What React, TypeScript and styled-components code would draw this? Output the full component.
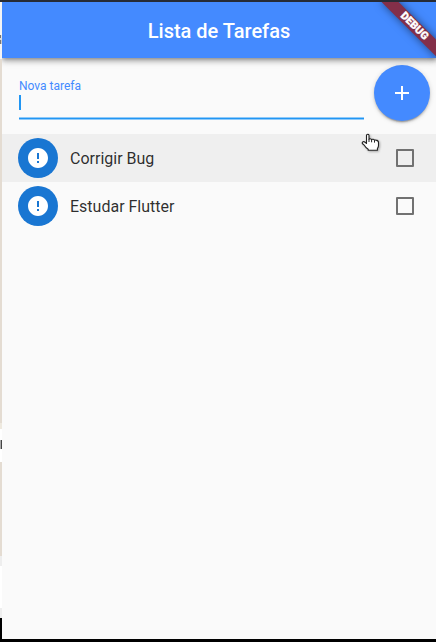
import React, { useState } from "react";
import styled, { createGlobalStyle } from "styled-components";

const GlobalStyle = createGlobalStyle`
  *, *::before, *::after { box-sizing: border-box; }
  html, body { margin: 0; background: #000; }
  body { font-family: Roboto, "Noto Sans", sans-serif; overflow: hidden; }
`;

const Desktop = styled.div`
  position: relative;
  display: grid;
  grid-template-columns: 2px 1fr;
  grid-template-rows: 2px 637px 3px;
  width: 436px;
  height: 642px;
  overflow: hidden;
  background: #000;
`;

const WindowEdge = styled.div`
  grid-column: 1 / -1;
  background: #262b36;
`;

const Backdrop = styled.div`
  display: flex;
  flex-direction: column;
`;

const Band = styled.div<{ $height: number; $fill: string }>`
  height: ${(p) => p.$height}px;
  background: ${(p) => p.$fill};
`;

const Screen = styled.main`
  position: relative;
  display: flex;
  flex-direction: column;
  overflow: hidden;
  background: #fafafa;
`;

const AppBar = styled.header`
  position: relative;
  display: flex;
  flex: 0 0 56px;
  align-items: center;
  justify-content: center;
  background: #448aff;
  box-shadow: 0 2px 4px -1px rgba(0, 0, 0, 0.3), 0 4px 5px rgba(0, 0, 0, 0.16),
    0 1px 10px rgba(0, 0, 0, 0.14);
`;

const Title = styled.h1`
  margin: 0;
  padding: 2px 0 0 0;
  color: #fff;
  font-size: 20px;
  font-weight: 500;
  line-height: 24px;
`;

const DebugBanner = styled.div`
  position: absolute;
  top: 27.5px;
  right: -42px;
  width: 80px;
  height: 12px;
  transform: rotate(45deg);
  transform-origin: 40px -27.5px;
  background: #832f49;
  box-shadow: 0 0 8px rgba(0, 0, 0, 0.5);
  color: #fff;
  font-size: 10.6px;
  font-weight: 900;
  line-height: 12px;
  text-align: center;
  letter-spacing: 0.1px;
  -webkit-text-stroke: 0.35px #fff;
`;

const Composer = styled.form`
  display: flex;
  align-items: flex-start;
  height: 76px;
  padding: 7px 6px 0 17px;
`;

const Field = styled.label`
  display: flex;
  flex: 1;
  flex-direction: column;
  height: 55px;
  margin-right: 10px;
  padding-top: 14px;
  background: linear-gradient(
      to bottom,
      #90caf9 0 1px,
      #2196f3 1px 2px,
      #90caf9 2px 3px
    )
    left bottom / 100% 3px no-repeat;
`;

const FieldLabel = styled.span`
  color: #448aff;
  font-size: 12px;
  line-height: 14px;
`;

const Caret = styled.span`
  width: 2px;
  height: 15px;
  margin-top: 2px;
  background: #2196f3;
`;

const AddButton = styled.button`
  display: flex;
  align-items: center;
  justify-content: center;
  width: 56px;
  height: 56px;
  padding: 0;
  border: 0;
  border-radius: 50%;
  background: #448aff;
  box-shadow: 0 3px 1px -2px rgba(0, 0, 0, 0.2), 0 2px 2px rgba(0, 0, 0, 0.14),
    0 1px 5px rgba(0, 0, 0, 0.16);
`;

const TaskList = styled.ul`
  margin: 0;
  padding: 0;
  list-style: none;
`;

const TaskRow = styled.li<{ $hovered: boolean }>`
  display: flex;
  align-items: center;
  height: 48px;
  padding: 0 22px 0 16px;
  background: ${(p) => (p.$hovered ? "#efefef" : "transparent")};
`;

const Avatar = styled.span`
  display: flex;
  align-items: center;
  justify-content: center;
  width: 40px;
  height: 40px;
  border-radius: 50%;
  background: #1976d2;
`;

const TaskName = styled.span`
  flex: 1;
  margin-left: 12px;
  padding-top: 1px;
  color: rgba(0, 0, 0, 0.83);
  font-size: 16px;
  line-height: 20px;
`;

const Checkbox = styled.button`
  width: 18px;
  height: 18px;
  padding: 0;
  border: 2px solid #717171;
  border-radius: 1px;
  background: transparent;
`;

const Pointer = styled.svg`
  position: absolute;
  left: 361px;
  top: 133px;
  filter: drop-shadow(1px 1px 1px rgba(0, 0, 0, 0.3));
`;

const bands: [number, string][] = [
  [33, "#f5f5f5"],
  [3, "linear-gradient(to right, #777 1px, #e5e5e5 1px)"],
  [2, "#dddddd"],
  [4, "linear-gradient(to right, #777 1px, #ccc 1px)"],
  [15, "#f5f5f5"],
  [364, "#e4dcd2"],
  [6, "#eee9df"],
  [11, "#ffffff"],
  [9, "linear-gradient(to right, #aaa 1px, #444 1px)"],
  [13, "#ffffff"],
  [94, "#e4dcd2"],
  [10, "#eeeeee"],
  [42, "#ffffff"],
  [10, "#eeeeee"],
  [21, "#000000"],
];

const tasks = ["Corrigir Bug", "Estudar Flutter"];

const PlusIcon = () => (
  <svg width="24" height="24" viewBox="0 0 24 24" fill="#fff">
    <path d="M19 13h-6v6h-2v-6H5v-2h6V5h2v6h6v2z" />
  </svg>
);

const ErrorIcon = () => (
  <svg width="24" height="24" viewBox="0 0 24 24" fill="#fff">
    <path d="M12 2C6.48 2 2 6.48 2 12s4.48 10 10 10 10-4.48 10-10S17.52 2 12 2zm1 15h-2v-2h2v2zm0-4h-2V7h2v6z" />
  </svg>
);

export default function App() {
  const [hovered, setHovered] = useState(0);
  return (
    <>
      <GlobalStyle />
      <Desktop>
        <WindowEdge />
        <Backdrop>
          {bands.map(([height, fill], i) => (
            <Band key={i} $height={height} $fill={fill} />
          ))}
        </Backdrop>
        <Screen>
          <AppBar>
            <Title>Lista de Tarefas</Title>
          </AppBar>
          <Composer onSubmit={(e) => e.preventDefault()}>
            <Field>
              <FieldLabel>Nova tarefa</FieldLabel>
              <Caret />
            </Field>
            <AddButton type="submit" aria-label="Adicionar">
              <PlusIcon />
            </AddButton>
          </Composer>
          <TaskList>
            {tasks.map((name, i) => (
              <TaskRow key={name} $hovered={i === hovered} onMouseEnter={() => setHovered(i)}>
                <Avatar>
                  <ErrorIcon />
                </Avatar>
                <TaskName>{name}</TaskName>
                <Checkbox type="button" role="checkbox" aria-checked={false} aria-label={name} />
              </TaskRow>
            ))}
          </TaskList>
          <DebugBanner>DEBUG</DebugBanner>
        </Screen>
        <Pointer width="19" height="19" viewBox="0 0 19 19">
          <path
            d="M5.5 10.5V2.2Q5.5 1.2 6.7 1.2T8 2.2V6.2Q8 5.6 9.2 5.7T10.6 6.8Q11 6 12.2 6.3T13.5 7.5Q14 6.8 15.1 7.1Q17.5 7.5 17.5 9.5V12.5Q17.5 14 16.4 15.5V17.3H7.2V16.3Q4.8 14.7 3.5 12.4L1.3 10.5Q.9 9.3 2 8.8Q3 8.4 4 9.2Z"
            fill="#fff"
            stroke="#222"
            strokeWidth="1.1"
            strokeLinejoin="round"
          />
          <path d="M8 6V9M10.6 6.8V9.3M13.5 7.5V9.6" fill="none" stroke="#222" strokeWidth="1" />
        </Pointer>
      </Desktop>
    </>
  );
}
